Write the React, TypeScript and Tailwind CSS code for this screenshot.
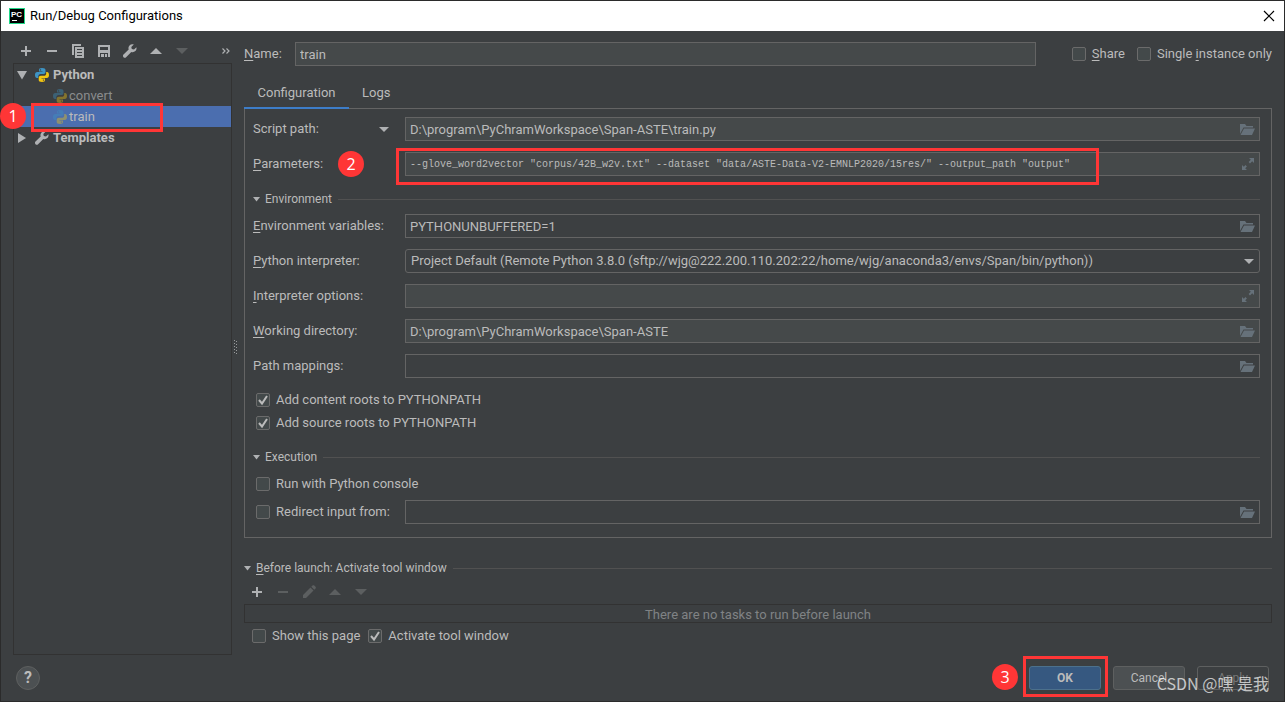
import { useState } from "react";
import type { ReactNode } from "react";

const COLORS = {
  icon: "#afb1b3",
  iconDisabled: "#5c5f60",
  folder: "#66717a",
};

const PlusIcon = () => (
  <svg width="16" height="16" viewBox="0 0 16 16" fill={COLORS.icon}>
    <path d="M7 3h2v4h4v2H9v4H7V9H3V7h4z" />
  </svg>
);

const MinusIcon = ({ disabled = false }: { disabled?: boolean }) => (
  <svg width="16" height="16" viewBox="0 0 16 16" fill={disabled ? COLORS.iconDisabled : COLORS.icon}>
    <path d="M3 7h10v2H3z" />
  </svg>
);

const CopyIcon = () => (
  <svg width="16" height="16" viewBox="0 0 16 16" fill={COLORS.icon}>
    <path d="M2 1h9v2H4v9H2z" />
    <path fillRule="evenodd" d="M5 4h9v11H5zM7 6v1h5V6zm0 3v1h5V9zm0 3v1h5v-1z" />
  </svg>
);

const SaveIcon = () => (
  <svg width="16" height="16" viewBox="0 0 16 16" fill={COLORS.icon}>
    <path fillRule="evenodd" d="M2 2h12v12h-2v-4H4v4H2zM4 4v3h8V4z" />
    <path d="M5 11h3v3H5zM9 11h2v3H9z" />
  </svg>
);

const WrenchIcon = () => (
  <svg width="16" height="16" viewBox="0 0 16 16" fill={COLORS.icon}>
    <path d="M14.4 4.2 12 6.6 9.8 6.1 9.3 4l2.5-2.5C10.300.9 8.600 1.200 7.500 2.400 6.400 3.500 6.200 5 6.700 6.400L1.500 11.600c-.7.7-.7 1.900 0 2.600s1.900.7 2.600 0L9.300 9c1.400.5 3 .2 4.100-.9 1-1.100 1.400-2.600 1-3.900z" />
  </svg>
);

const UpIcon = ({ disabled = false }: { disabled?: boolean }) => (
  <svg width="16" height="16" viewBox="0 0 16 16" fill={disabled ? COLORS.iconDisabled : COLORS.icon}>
    <path d="M2 11h12L8 5z" />
  </svg>
);

const DownIcon = () => (
  <svg width="16" height="16" viewBox="0 0 16 16" fill={COLORS.iconDisabled}>
    <path d="M2 5h12l-6 6z" />
  </svg>
);

const PencilIcon = () => (
  <svg width="16" height="16" viewBox="0 0 16 16" fill={COLORS.iconDisabled}>
    <path d="M2 11l7.500-7.500 3 3L5 14H2zM10.300 2.700l1.200-1.200c.5-.5 1.300-.5 1.800 0l1.200 1.200c.5.5.5 1.300 0 1.800l-1.200 1.200z" />
  </svg>
);

const MoreIcon = () => (
  <svg width="10" height="8" viewBox="0 0 10 8" fill="none" stroke={COLORS.icon} strokeWidth="1.200">
    <path d="M1.500 1.500L4 4 1.500 6.500M5.500 1.500L8 4 5.500 6.500" />
  </svg>
);

const FolderIcon = () => (
  <svg width="16" height="16" viewBox="0 0 16 16" fill={COLORS.folder}>
    <path d="M1 3h5l1.500 2H14v1.500H4.500L2 11l-1 2z" />
    <path d="M5 7.500h11L13 14H1.500z" />
  </svg>
);

const ExpandIcon = () => (
  <svg width="14" height="14" viewBox="0 0 14 14" fill={COLORS.folder}>
    <path d="M8 1h5v5l-1.800-1.800-2.200 2.200-1.400-1.400 2.200-2.200zM6 13H1V8l1.800 1.800L4.500 8.100l1.400 1.400-1.700 1.700z" />
  </svg>
);

const PythonIcon = ({ faded = false }: { faded?: boolean }) => (
  <svg width="16" height="16" viewBox="0 0 16 16" opacity={faded ? 0.4 : 1}>
    <path
      fill="#3e94c4"
      d="M8 1C5.500 1 5 1.800 5 3v1.500h3.500V5H3.300C1.800 5 1 6.200 1 8s.8 3 2 3h1.300V9.300c0-1.200 1-2.300 2.300-2.300h3C10.800 7 11.500 6 11.500 5V3c0-1.200-1-2-3.500-2zM6.500 2.200a.7.7 0 1 1 0 1.400.7.7 0 0 1 0-1.400z"
    />
    <path
      fill="#f2c511"
      d="M8 15c2.500 0 3-.8 3-2v-1.500H7.500V11h5.200c1.500 0 2.300-1.200 2.300-3s-.8-3-2-3h-.8v1.700c0 1.200-1 2.100-2.300 2.100h-3C5.600 8.800 4.700 9.500 4.700 11v2c0 1.200.8 2 3.300 2zm1.500-1.200a.7.7 0 1 1 0-1.400.7.7 0 0 1 0 1.400z"
    />
  </svg>
);

const Twisty = () => (
  <svg width="8" height="8" viewBox="0 0 8 8" fill={COLORS.icon}>
    <path d="M0 2h7L3.500 6.500z" />
  </svg>
);

const Chevron = () => (
  <svg width="10" height="8" viewBox="0 0 10 8" fill={COLORS.icon}>
    <path d="M0 2h10L5 7z" />
  </svg>
);

const TreeArrow = ({ open = false }: { open?: boolean }) => (
  <svg width="10" height="10" viewBox="0 0 10 10" fill={COLORS.icon}>
    <path d={open ? "M0 1h10L5 9.500z" : "M1 0v10l8-5z"} />
  </svg>
);

function ToolButton({ label, disabled, children }: { label: string; disabled?: boolean; children: ReactNode }) {
  return (
    <button type="button" aria-label={label} disabled={disabled} className="flex w-[26px] justify-center">
      {children}
    </button>
  );
}

// "&Name" underlines the letter that follows the ampersand
function Mnemonic({ text }: { text: string }) {
  const at = text.indexOf("&");
  if (at < 0) return <>{text}</>;
  return (
    <>
      {text.slice(0, at)}
      <span className="underline underline-offset-2">{text[at + 1]}</span>
      {text.slice(at + 2)}
    </>
  );
}

function CheckBox({ label, checked = false }: { label: string; checked?: boolean }) {
  const [on, setOn] = useState(checked);
  return (
    <label className="flex items-center gap-[6px] whitespace-nowrap">
      <span className="grid">
        <input
          type="checkbox"
          checked={on}
          onChange={() => setOn(!on)}
          className="col-start-1 row-start-1 size-[14px] appearance-none rounded-[2px] border border-[#6b6b6b] bg-[#43494a]"
        />
        {on && (
          <svg
            width="14"
            height="14"
            viewBox="0 0 14 14"
            fill="none"
            stroke="#bbbbbb"
            strokeWidth="2"
            className="pointer-events-none col-start-1 row-start-1"
          >
            <path d="M3 7l3 3.500L11 3" />
          </svg>
        )}
      </span>
      <span>
        <Mnemonic text={label} />
      </span>
    </label>
  );
}

interface FieldProps {
  id: string;
  label: string;
  value?: string;
  icon?: ReactNode;
  dark?: boolean;
  mono?: boolean;
}

function TextField({ id, value = "", icon, dark, mono, label }: FieldProps) {
  return (
    <div
      className={`flex h-6 min-w-0 flex-1 items-center border border-[#646464] pr-1 ${dark ? "bg-[#3c3f41]" : "bg-[#45494a]"}`}
    >
      <input
        id={id}
        aria-label={label.replace("&", "")}
        defaultValue={value}
        className={`h-full min-w-0 flex-1 bg-transparent px-1 outline-none ${mono ? "font-['Liberation_Mono',monospace] text-[10px]" : ""}`}
      />
      {icon}
    </div>
  );
}

function FieldRow({ children, ...field }: FieldProps & { children?: ReactNode }) {
  return (
    <div className="flex items-center">
      <div className="flex w-[152px] shrink-0 items-center justify-between pr-4">
        <label htmlFor={field.id} className="whitespace-nowrap">
          <Mnemonic text={field.label} />
        </label>
        {children}
      </div>
      <TextField {...field} />
    </div>
  );
}

function SectionHeading({ title }: { title: string }) {
  return (
    <div className="flex h-[38px] items-center pt-2 text-[12px]">
      <button type="button" className="flex items-center gap-1">
        <Twisty />
        <span>
          <Mnemonic text={title} />
        </span>
      </button>
      <div className="ml-[6px] h-px flex-1 bg-[#515151]" />
    </div>
  );
}

function Badge({ n, className }: { n: number; className: string }) {
  return (
    <span
      className={`absolute z-10 flex size-[26px] items-center justify-center rounded-full bg-[#ff3636] font-['Open_Sans',sans-serif] text-[16px] leading-none text-white ${className}`}
    >
      {n}
    </span>
  );
}

function Sidebar() {
  return (
    <aside className="flex w-[219px] shrink-0 flex-col">
      <div className="flex h-8 items-center pt-2">
        <ToolButton label="Add"><PlusIcon /></ToolButton>
        <ToolButton label="Remove"><MinusIcon /></ToolButton>
        <ToolButton label="Copy"><CopyIcon /></ToolButton>
        <ToolButton label="Save"><SaveIcon /></ToolButton>
        <ToolButton label="Edit templates"><WrenchIcon /></ToolButton>
        <ToolButton label="Move up"><UpIcon /></ToolButton>
        <ToolButton label="Move down" disabled><DownIcon /></ToolButton>
        <button type="button" aria-label="More" className="mr-px ml-auto">
          <MoreIcon />
        </button>
      </div>
      <ul className="flex-1 border border-[#323232]">
        <li className="flex h-[21px] items-center pl-[3px] font-bold">
          <TreeArrow open />
          <span className="mr-[3px] ml-[7px]"><PythonIcon /></span>
          Python
        </li>
        <li className="flex h-[21px] items-center pl-[38px] text-[#8a8c8d]">
          <PythonIcon faded />
          <span className="pl-px">convert</span>
        </li>
        <li className="relative flex h-[21px] items-center bg-[#4b6eaf] pl-[38px]">
          <PythonIcon faded />
          <span className="pl-px">train</span>
          <Badge n={1} className="-top-[3px] -left-[14px]" />
          <span className="absolute -top-[3px] left-[17px] h-[29px] w-[132px] border-3 border-[#ff3636]" />
        </li>
        <li className="flex h-[21px] items-center pl-[3px] font-bold">
          <TreeArrow />
          <span className="mr-[3px] ml-[7px]"><WrenchIcon /></span>
          Templates
        </li>
      </ul>
    </aside>
  );
}

function ConfigurationPanel() {
  return (
    <div className="border border-[#646464] pt-2 pr-[11px] pb-[13px] pl-2">
      <div className="flex flex-col gap-[11px]">
        <FieldRow id="script" label="Script path:" value="D:\program\PyChramWorkspace\Span-ASTE\train.py" icon={<FolderIcon />}>
          <button type="button" aria-label="Choose target type">
            <Chevron />
          </button>
        </FieldRow>
        <div className="relative">
          <FieldRow
            id="parameters"
            label="&Parameters:"
            value={'--glove_word2vector "corpus/42B_w2v.txt" --dataset "data/ASTE-Data-V2-EMNLP2020/15res/" --output_path "output"'}
            icon={<ExpandIcon />}
            mono
          />
          <Badge n={2} className="-top-px left-[85px]" />
          <span className="pointer-events-none absolute -top-1 left-[143px] h-[37px] w-[703px] border-3 border-[#ff3636]" />
        </div>
      </div>

      <SectionHeading title="Environment" />
      <div className="flex flex-col gap-[11px]">
        <FieldRow id="env" label="&Environment variables:" value="PYTHONUNBUFFERED=1" icon={<FolderIcon />} dark />
        <div className="flex items-center">
          <label htmlFor="interpreter" className="w-[152px] shrink-0">
            <Mnemonic text="&Python interpreter:" />
          </label>
          <div className="grid min-w-0 flex-1 items-center">
            <select
              id="interpreter"
              className="col-start-1 row-start-1 h-6 w-full appearance-none rounded-[3px] border border-[#646464] bg-[#3c3f41] px-[5px] outline-none"
            >
              <option>Project Default (Remote Python 3.8.0 (sftp://wjg@222.200.110.202:22/home/wjg/anaconda3/envs/Span/bin/python))</option>
            </select>
            <span className="pointer-events-none col-start-1 row-start-1 mr-[6px] justify-self-end">
              <Chevron />
            </span>
          </div>
        </div>
        <FieldRow id="options" label="&Interpreter options:" icon={<ExpandIcon />} />
        <FieldRow id="workdir" label="&Working directory:" value="D:\program\PyChramWorkspace\Span-ASTE" icon={<FolderIcon />} />
        <FieldRow id="mappings" label="Path mappings:" icon={<FolderIcon />} dark />
      </div>
      <div className="pt-[10px] pl-[3px]">
        <div className="flex h-[23px] items-center"><CheckBox label="Add content roots to PYTHONPATH" checked /></div>
        <div className="flex h-[23px] items-center"><CheckBox label="Add source roots to PYTHONPATH" checked /></div>
      </div>

      <SectionHeading title="Execution" />
      <div className="flex h-[23px] items-center pl-[3px]">
        <CheckBox label="Run with Python console" />
      </div>
      <div className="mt-[5px] flex items-center">
        <div className="w-[152px] shrink-0 pl-[3px]">
          <CheckBox label="Redirect input from:" />
        </div>
        <TextField id="redirect" label="Redirect input file" icon={<FolderIcon />} dark />
      </div>
    </div>
  );
}

function BeforeLaunch() {
  return (
    <section className="mt-[7px]">
      <SectionHeading title="&Before launch: Activate tool window" />
      <div className="flex h-[18px] items-center">
        <ToolButton label="Add task"><PlusIcon /></ToolButton>
        <ToolButton label="Remove task" disabled><MinusIcon disabled /></ToolButton>
        <ToolButton label="Edit task" disabled><PencilIcon /></ToolButton>
        <ToolButton label="Move task up" disabled><UpIcon disabled /></ToolButton>
        <ToolButton label="Move task down" disabled><DownIcon /></ToolButton>
      </div>
      <div className="mt-[3px] flex h-[19px] justify-center overflow-hidden border border-[#323232] text-[#808385]">
        <span className="whitespace-nowrap">There are no tasks to run before launch</span>
      </div>
      <div className="flex h-[26px] items-center gap-2 pl-2">
        <CheckBox label="Show this page" />
        <CheckBox label="Activate tool window" checked />
      </div>
    </section>
  );
}

export default function App() {
  return (
    <div className="flex min-h-screen flex-col border border-[#2b2b2b] bg-[#3c3f41] font-['Roboto','Noto_Sans_CJK_SC',sans-serif] text-[13px] leading-[20px] text-[#bbbbbb]">
      <header className="flex h-[30px] shrink-0 items-center bg-white pr-[9px] pl-2 text-black">
        <svg width="16" height="16" viewBox="0 0 16 16">
          <rect width="16" height="16" fill="#21d789" />
          <rect x="1" y="1" width="14" height="14" fill="#000" />
          <text x="2" y="9" fill="#fff" fontSize="8" fontWeight="bold" fontFamily="Liberation Sans, sans-serif">PC</text>
          <path fill="#fff" d="M3 12h5v1H3z" />
        </svg>
        <h1 className="ml-[5px]">Run/Debug Configurations</h1>
        <button type="button" aria-label="Close" className="ml-auto">
          <svg width="12" height="12" viewBox="0 0 12 12" stroke="#000" strokeWidth="1.200">
            <path d="M1 1l10 10M11 1L1 11" />
          </svg>
        </button>
      </header>

      <main className="flex flex-1 pr-3 pl-3">
        <Sidebar />
        <div className="flex w-3 shrink-0 items-center pt-2 pl-px">
          <svg width="5" height="16" viewBox="0 0 5 16" fill="#9a9c9d">
            {[0, 3, 6, 9, 12].map((y) => (
              <g key={y}>
                <rect x="1" y={y + 1} width="1" height="1" />
                <rect x="3" y={y + 2} width="1" height="1" />
              </g>
            ))}
          </svg>
        </div>
        <div className="min-w-0 flex-1">
          <div className="flex items-center pt-[11px]">
            <label htmlFor="name" className="w-[51px] shrink-0">
              <Mnemonic text="&Name:" />
            </label>
            <TextField id="name" label="Name" value="train" />
            <div className="ml-9 flex gap-3">
              <CheckBox label="&Share" />
              <CheckBox label="Single &instance only" />
            </div>
          </div>
          <div role="tablist" className="mt-[14px] flex h-[28px]">
            <button type="button" role="tab" aria-selected="true" className="z-10 -mb-px w-[105px] border-b-2 border-[#3d7dc8] pb-[2px]">
              Configuration
            </button>
            <button type="button" role="tab" aria-selected="false" className="px-[13px] pb-[3px]">
              Logs
            </button>
          </div>
          <ConfigurationPanel />
          <BeforeLaunch />
        </div>
      </main>

      <footer className="flex items-center gap-3 pt-[11px] pr-[15px] pb-[11px] pl-[15px]">
        <button
          type="button"
          aria-label="Help"
          className="mr-auto flex size-6 items-center justify-center rounded-full border border-[#5e6060] bg-[#4c5052] text-[16px] font-bold"
        >
          ?
        </button>
        <div className="relative">
          <Badge n={3} className="-top-[2px] -left-[37px]" />
          <button type="button" className="block h-6 w-[72px] rounded-[3px] border border-[#4c708c] bg-[#365880] text-[12px] leading-none font-bold">
            OK
          </button>
          <span className="pointer-events-none absolute -top-[10px] -left-[6px] h-[41px] w-[85px] border-3 border-[#ff3636]" />
        </div>
        <button type="button" className="h-6 w-[72px] rounded-[3px] border border-[#5e6060] bg-[#4c5052] text-[12px] leading-none">
          Cancel
        </button>
        <div className="relative">
          <button type="button" disabled className="block h-6 w-[72px] rounded-[3px] border border-[#5e6060] text-[12px] leading-none text-[#777777]">
            Apply
          </button>
          <span className="pointer-events-none absolute top-[7px] right-0 font-['Noto_Sans_CJK_SC',sans-serif] text-[16px] whitespace-nowrap text-white/70">
            CSDN @嘿 是我
          </span>
        </div>
      </footer>
    </div>
  );
}
